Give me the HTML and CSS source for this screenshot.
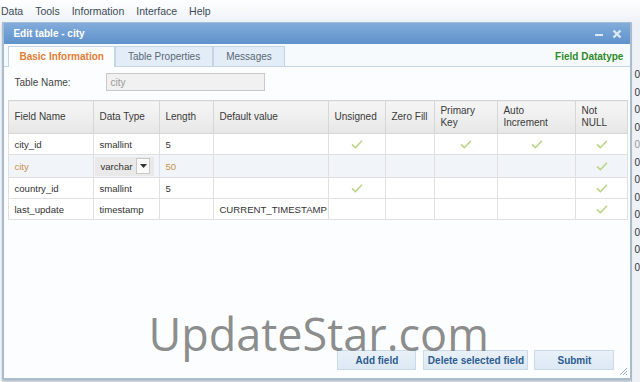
FILE: index.html
```html
<!DOCTYPE html>
<html lang="en">
  <head>
    <meta charset="UTF-8" />
    <title>Edit table - city</title>
    <link rel="stylesheet" href="styles.css">
  </head>
  <body>
    <nav class="menubar">
      <span>Data</span>
      <span>Tools</span>
      <span>Information</span>
      <span>Interface</span>
      <span>Help</span>
    </nav>
    <div class="desk">
      <div class="side-left"><span>t</span></div>
      <div class="dialog">
        <div class="titlebar">
          <span class="title">Edit table - city</span>
          <span class="tools">
            <svg width="10" height="10" viewBox="0 0 10 10"><rect x="1" y="5" width="8" height="2" fill="#dbe8f5"/></svg>
            <svg width="10" height="10" viewBox="0 0 10 10"><path d="M1.5 1.5 L8.5 8.5 M8.5 1.5 L1.5 8.5" stroke="#dbe8f5" stroke-width="2.4"/></svg>
          </span>
        </div>
        <div class="tabbar">
          <div class="tabs">
            <span class="tab active">Basic Information</span>
            <span class="tab">Table Properties</span>
            <span class="tab">Messages</span>
          </div>
          <span class="datatype">Field Datatype</span>
        </div>
        <div class="body">
          <div class="name-row">
            <label for="tname">Table Name:</label>
            <input id="tname" type="text" value="city" readonly />
          </div>
          <table class="fields">
            <colgroup>
              <col style="width:85px"><col style="width:66px"><col style="width:54px">
              <col style="width:115px"><col style="width:57px"><col style="width:49px">
              <col style="width:63px"><col style="width:78px"><col style="width:52px">
            </colgroup>
            <thead>
              <tr>
                <th>Field Name</th>
                <th>Data Type</th>
                <th>Length</th>
                <th>Default value</th>
                <th>Unsigned</th>
                <th>Zero Fill</th>
                <th>Primary<br>Key</th>
                <th>Auto<br>Increment</th>
                <th>Not<br>NULL</th>
              </tr>
            </thead>
            <tbody>
              <tr>
                <td>city_id</td>
                <td>smallint</td>
                <td>5</td>
                <td></td>
                <td class="ck"><svg class="tick" viewBox="0 0 14 11"><path d="M1.5 6 L5 9.5 L12.5 1.5"/></svg></td>
                <td></td>
                <td class="ck"><svg class="tick" viewBox="0 0 14 11"><path d="M1.5 6 L5 9.5 L12.5 1.5"/></svg></td>
                <td class="ck"><svg class="tick" viewBox="0 0 14 11"><path d="M1.5 6 L5 9.5 L12.5 1.5"/></svg></td>
                <td class="ck"><svg class="tick" viewBox="0 0 14 11"><path d="M1.5 6 L5 9.5 L12.5 1.5"/></svg></td>
              </tr>
              <tr class="editing">
                <td class="tan">city</td>
                <td class="sel-cell">
                  <div class="select"><span>varchar</span><span class="arrow"><svg width="7" height="4" viewBox="0 0 7 4"><path d="M0 0 H7 L3.5 4 Z" fill="#333"/></svg></span></div>
                </td>
                <td class="tan">50</td>
                <td></td>
                <td></td>
                <td></td>
                <td></td>
                <td></td>
                <td class="ck"><svg class="tick" viewBox="0 0 14 11"><path d="M1.5 6 L5 9.5 L12.5 1.5"/></svg></td>
              </tr>
              <tr>
                <td>country_id</td>
                <td>smallint</td>
                <td>5</td>
                <td></td>
                <td class="ck"><svg class="tick" viewBox="0 0 14 11"><path d="M1.5 6 L5 9.5 L12.5 1.5"/></svg></td>
                <td></td>
                <td></td>
                <td></td>
                <td class="ck"><svg class="tick" viewBox="0 0 14 11"><path d="M1.5 6 L5 9.5 L12.5 1.5"/></svg></td>
              </tr>
              <tr>
                <td>last_update</td>
                <td>timestamp</td>
                <td></td>
                <td>CURRENT_TIMESTAMP</td>
                <td></td>
                <td></td>
                <td></td>
                <td></td>
                <td class="ck"><svg class="tick" viewBox="0 0 14 11"><path d="M1.5 6 L5 9.5 L12.5 1.5"/></svg></td>
              </tr>
            </tbody>
          </table>
          <div class="buttons">
            <button class="btn add">Add field</button>
            <button class="btn del">Delete selected field</button>
            <button class="btn submit">Submit</button>
          </div>
          <div class="watermark">UpdateStar.com</div>
        </div>
        <svg class="grip" width="10" height="10" viewBox="0 0 10 10"><path d="M9 2 L2 9 M9 5 L5 9 M9 8 L8 9" stroke="#9aaabb" stroke-width="1"/></svg>
      </div>
      <div class="side-right">
        <span>0</span><span>0</span><span>0</span><span>0</span><span class="faded">0</span><span>0</span>
        <span>0</span><span>0</span><span>0</span><span>0</span><span>0</span><span>0</span>
      </div>
    </div>
  </body>
</html>
```

FILE: styles.css
```css
body {
  margin: 0;
  width: 640px;
  height: 382px;
  overflow: hidden;
  background-color: #dde3ea;
  font-family: "Liberation Sans", Arial, sans-serif;
  font-size: 10px;
  color: #333;
}
.menubar {
  height: 22px;
  display: flex;
  align-items: center;
  gap: 12px;
  padding-left: 1px;
  background: linear-gradient(#ffffff, #eef3f8);
  font-size: 10.5px;
  color: #3c4a58;
}
.desk {
  display: flex;
  height: 360px;
}
.side-left {
  width: 4px;
  background-color: #f3f6f9;
  position: relative;
}
.side-left span {
  position: absolute;
  left: -3px;
  top: 328px;
  font-size: 10px;
  color: #222;
}
.dialog {
  width: 626px;
  height: 355px;
  border: 1px solid #a6bed6;
  border-left: 2px solid #a9bcd0;
  background-color: #fcfdfe;
  display: flex;
  flex-direction: column;
  position: relative;
  box-shadow: 0 2px 2px rgba(80, 100, 120, 0.35);
}
.titlebar {
  height: 21px;
  display: flex;
  align-items: center;
  justify-content: space-between;
  padding: 0 8px 0 9px;
  background: linear-gradient(#82acdb, #5f92cb);
}
.title {
  color: #ffffff;
  font-weight: bold;
  font-size: 10px;
}
.tools {
  display: flex;
  gap: 8px;
  margin-top: 1px;
}
.tabbar {
  height: 23px;
  display: flex;
  align-items: flex-end;
  justify-content: space-between;
  padding: 0 7px 0 4px;
  background-color: #f7fafc;
  border-bottom: 1px solid #c6d5e4;
  box-sizing: border-box;
}
.tabs {
  display: flex;
}
.tab {
  height: 19px;
  line-height: 19px;
  padding: 0 12px;
  border: 1px solid #c3d4e5;
  border-bottom: none;
  background-color: #e3edf7;
  color: #596774;
  font-size: 10px;
  white-space: nowrap;
  margin-bottom: -1px;
}
.tab.active {
  background-color: #fcfdfe;
  color: #e07e35;
  font-weight: bold;
  padding: 0 10px;
  height: 20px;
}
.datatype {
  align-self: center;
  margin-top: 2px;
  color: #2e8a2a;
  font-weight: bold;
  font-size: 10px;
}
.body {
  flex: 1;
  display: flex;
  flex-direction: column;
  padding: 0 4px 8px 4px;
  position: relative;
}
.name-row {
  display: flex;
  align-items: center;
  margin-top: 6px;
  height: 18px;
}
.name-row label {
  width: 92px;
  padding-left: 6px;
  color: #444;
  font-size: 10px;
}
.name-row input {
  width: 159px;
  height: 18px;
  box-sizing: border-box;
  border: 1px solid #c8c8c8;
  background-color: #f1f1f1;
  color: #999;
  font-family: "Liberation Sans", Arial, sans-serif;
  font-size: 10px;
  padding: 0 3px;
  outline: none;
}
.fields {
  margin-top: 9px;
  width: 619px;
  border-collapse: collapse;
  table-layout: fixed;
}
.fields th {
  height: 32px;
  padding: 0 5px;
  text-align: left;
  font-weight: normal;
  color: #3a3a3a;
  font-size: 10px;
  line-height: 12px;
  background: linear-gradient(#f6f6f6, #e7e7e7);
  border: 1px solid #d6d6d6;
}
.fields td {
  height: 20px;
  padding: 0 5px;
  border: 1px solid #e0e0e0;
  white-space: nowrap;
  overflow: hidden;
  color: #333;
  font-size: 9.6px;
  background-color: #ffffff;
}
.fields tr.editing td {
  background-color: #f1f4f8;
}
.fields td.tan {
  color: #c7934c;
}
.fields td.ck {
  text-align: center;
}
.fields td.sel-cell {
  padding: 1px 1px;
}
.tick {
  width: 12px;
  height: 9px;
  vertical-align: middle;
}
.tick path {
  fill: none;
  stroke: #bcd588;
  stroke-width: 2;
  stroke-linecap: round;
  stroke-linejoin: round;
}
.select {
  display: flex;
  align-items: center;
  justify-content: space-between;
  height: 19px;
  padding: 0 4px 0 5px;
  background-color: #e9e9e9;
  width: 50px;
}
.arrow {
  width: 12px;
  height: 14px;
  border: 1px solid #c9c9c9;
  background-color: #fafafa;
  display: flex;
  align-items: center;
  justify-content: center;
}
.watermark {
  position: absolute;
  left: 144px;
  top: 236px;
  font-family: "Open Sans", sans-serif;
  font-size: 45px;
  line-height: 61px;
  color: rgba(125, 125, 125, 0.9);
  pointer-events: none;
}
.buttons {
  margin-top: auto;
  display: flex;
  justify-content: flex-end;
  padding-right: 12px;
  gap: 7px;
}
.btn {
  height: 20px;
  border: 1px solid #cbdaea;
  background: linear-gradient(#e9f1f9, #dce8f4);
  color: #2c5b8e;
  font-family: "Liberation Sans", Arial, sans-serif;
  font-size: 10px;
  font-weight: bold;
  padding: 0;
}
.btn.add {
  width: 79px;
}
.btn.del {
  width: 105px;
}
.btn.submit {
  width: 80px;
  margin-left: -1px;
}
.grip {
  position: absolute;
  right: 2px;
  bottom: 2px;
}
.side-right {
  flex: 1;
  display: flex;
  flex-direction: column;
  padding-top: 44px;
  padding-left: 2px;
  line-height: 17.5px;
  background-color: #eef1f5;
  border-left: 1px solid #b8c4d0;
  font-size: 10px;
  color: #333;
}
.side-right .faded {
  color: #999;
}
```
